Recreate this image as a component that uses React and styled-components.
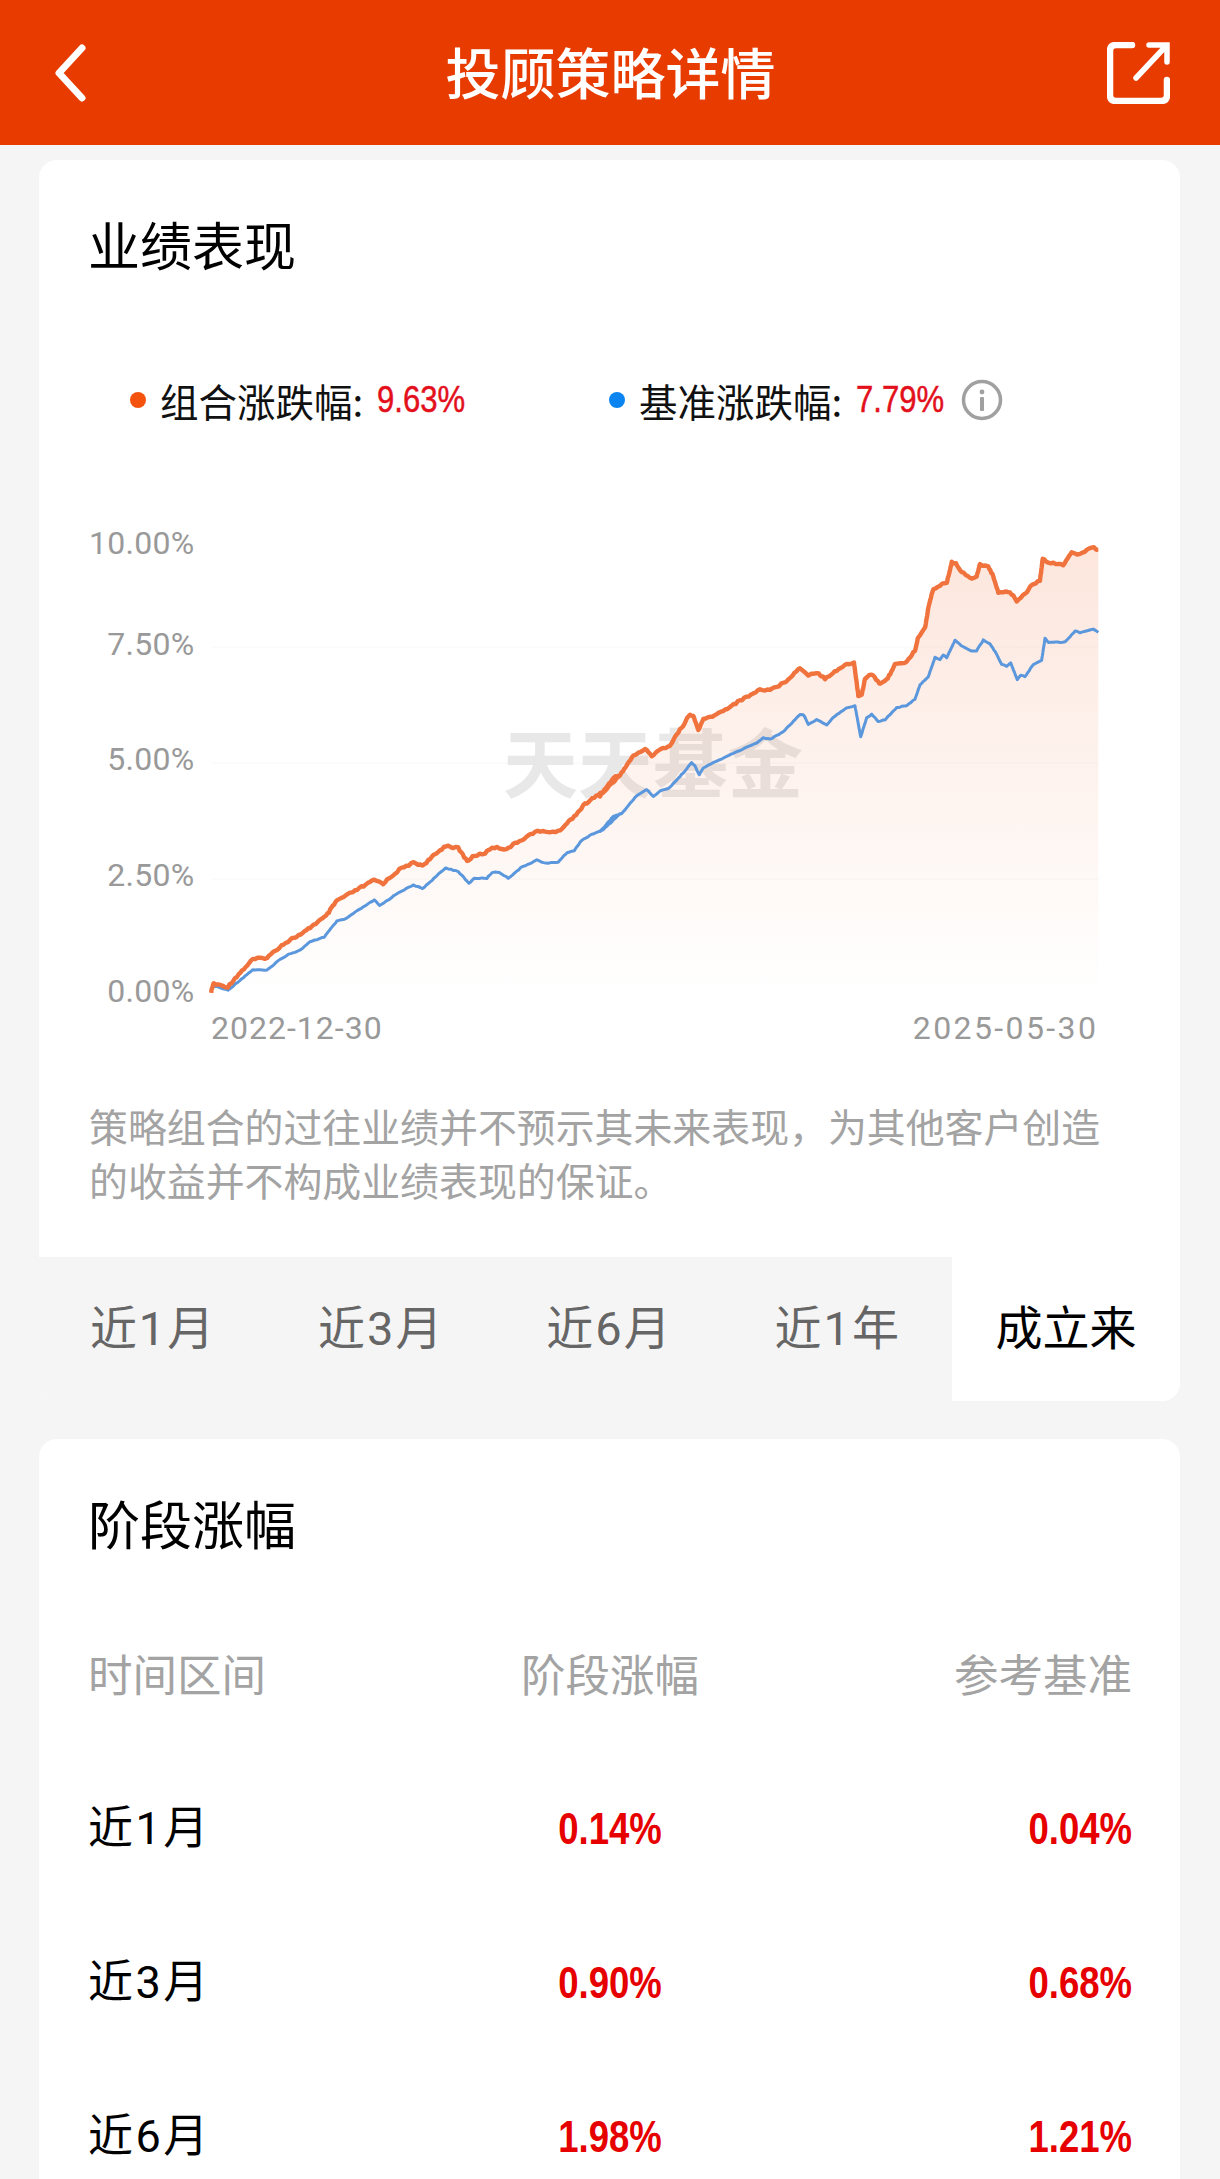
import React from 'react';
import styled, { createGlobalStyle } from 'styled-components';

const GlobalStyle = createGlobalStyle`
  html, body {
    margin: 0;
    padding: 0;
    background: #f5f5f5;
  }
  body {
    font-family: Roboto, "Noto Sans CJK SC", sans-serif;
  }
`;

const Page = styled.div`
  width: 1220px;
  height: 2179px;
  overflow: hidden;
  background: #f5f5f5;
`;

const Header = styled.header`
  height: 145px;
  background: #e73b00;
  display: grid;
  grid-template-columns: 1fr auto 1fr;
  align-items: center;
  padding: 0 50px 0 54px;
  color: #fff;
`;

const HeaderTitle = styled.h1`
  margin: 0 0 5px -3px;
  font-size: 55px;
  line-height: 1;
  font-weight: 500;
  font-family: "Noto Sans CJK SC", sans-serif;
`;

const ShareIcon = styled.svg`
  justify-self: end;
`;

const Card = styled.section`
  margin: ${(p) => p.$top}px 40px 0 39px;
  width: 1141px;
  background: #fff;
  border-radius: 18px;
  overflow: hidden;
`;

const CardTitle = styled.h2`
  margin: 49px 0 0 49px;
  font-size: 52px;
  line-height: 70px;
  font-weight: 400;
  color: #000;
  font-family: "Noto Sans CJK SC", sans-serif;
`;

const Legend = styled.div`
  display: flex;
  align-items: center;
  height: 50px;
  margin: 96px 0 0 91px;
`;

const LegendItem = styled.div`
  display: flex;
  align-items: center;
  width: ${(p) => (p.$grow ? 'auto' : '479px')};
`;

const Dot = styled.span`
  width: 16px;
  height: 16px;
  border-radius: 50%;
  background: ${(p) => p.$color};
  margin-right: 14px;
`;

const LegendLabel = styled.span`
  font-size: 38.5px;
  color: #111;
  font-family: "Noto Sans CJK SC", sans-serif;
`;

// no narrow face is installed, so the digits get squeezed
const LegendValue = styled.span`
  display: inline-block;
  width: 88px;
  margin-left: 14px;
  white-space: nowrap;
  transform: scaleX(0.84);
  transform-origin: left center;
  font-family: "Liberation Sans", sans-serif;
  font-size: 37px;
  -webkit-text-stroke: 0.5px #e3101c;
  color: #e3101c;
`;

const InfoIcon = styled.svg`
  margin-left: 17px;
`;

const ChartSvg = styled.svg`
  display: block;
  margin-top: 96px;
`;

const Disclaimer = styled.p`
  margin: 47px 51px 0 50px;
  font-size: 38.9px;
  line-height: 54px;
  color: #a3a3a3;
  font-family: "Noto Sans CJK SC", sans-serif;
`;

const Tabs = styled.div`
  margin-top: 51px;
  display: grid;
  grid-template-columns: repeat(5, 1fr);
  height: 144px;
`;

const Tab = styled.div`
  display: flex;
  align-items: center;
  justify-content: center;
  padding-bottom: 9px;
  font-size: 47px;
  letter-spacing: ${(p) => (p.$active ? 0 : '2px')};
  background: ${(p) => (p.$active ? '#fff' : '#f5f5f5')};
  color: ${(p) => (p.$active ? '#000' : '#666')};
`;

const Table = styled.div`
  margin: 0 48px 0 49px;
  padding-bottom: 60px;
`;

const Row = styled.div`
  display: grid;
  grid-template-columns: 1fr 1fr 1fr;
  align-items: center;
  height: ${(p) => (p.$head ? '90px' : '154px')};
  margin-top: ${(p) => p.$gap || 0}px;
`;

const Cell = styled.div`
  text-align: ${(p) => p.$align};
  font-size: 44.5px;
  line-height: 1.2;
  color: #a3a3a3;
`;

const RowName = styled.div`
  font-size: 45px;
  line-height: 1.2;
  letter-spacing: 2.5px;
  color: #000;
`;

const Value = styled.div`
  text-align: ${(p) => p.$align};
  font-family: "Liberation Sans", sans-serif;
  font-weight: 700;
  font-size: 44px;
  line-height: 1.2;
  color: #e60000;
  transform: scaleX(0.83);
  transform-origin: ${(p) => p.$align} center;
`;

// traced from the reference, in crop coordinates
const orangeLeft = [[423,1395],[430,1370],[445,1375],[470,1380],[490,1355],[540,1300],[580,1295],[620,1260],[650,1240],[680,1225],[710,1200],[745,1175],[775,1130],[820,1105],[880,1070],[905,1080],[950,1040],[990,1020],[1015,1028],[1080,970],[1115,978],[1140,1015],[1160,1000],[1190,992],[1210,975],[1250,980],[1330,930],[1395,930],[1440,885],[1470,850],[1490,835],[1520,815],[1568,765]];
const orangeRight = [[0,825],[40,775],[60,765],[100,710],[135,690],[155,710],[180,690],[205,685],[240,635],[270,590],[280,595],[295,635],[310,605],[350,590],[420,550],[480,518],[510,518],[550,500],[600,455],[625,475],[650,468],[675,485],[710,462],[740,445],[762,440],[775,535],[785,535],[795,485],[815,472],[842,503],[860,490],[885,445],[915,442],[945,405],[955,365],[975,340],[985,280],[1000,225],[1020,215],[1040,210],[1055,150],[1068,150],[1085,178],[1115,195],[1130,190],[1140,155],[1165,160],[1180,190],[1195,235],[1230,235],[1250,260],[1275,240],[1295,215],[1320,200],[1328,140],[1345,148],[1390,155],[1415,122],[1440,125],[1475,105],[1495,112]];
const blueLeft = [[423,1385],[435,1378],[470,1390],[540,1330],[580,1332],[610,1305],[640,1285],[670,1275],[700,1250],[740,1235],[775,1190],[800,1183],[820,1168],[880,1128],[895,1145],[950,1105],[990,1085],[1015,1095],[1080,1035],[1115,1045],[1145,1080],[1160,1065],[1195,1065],[1210,1048],[1230,1048],[1255,1065],[1290,1035],[1335,1012],[1360,1022],[1395,1018],[1420,990],[1440,985],[1460,955],[1495,935],[1520,925],[1568,878]];
const blueRight = [[0,930],[40,885],[65,878],[110,825],[140,808],[160,828],[180,812],[205,805],[240,770],[275,730],[285,740],[298,765],[310,745],[340,730],[400,703],[470,672],[490,658],[510,662],[550,640],[600,590],[610,590],[625,618],[650,605],[680,620],[700,598],[740,570],[765,565],[782,655],[800,600],[815,590],[835,610],[855,605],[890,570],[920,565],[945,545],[960,505],[985,480],[1005,425],[1020,430],[1030,418],[1040,425],[1065,375],[1090,395],[1115,405],[1130,405],[1150,375],[1170,385],[1190,415],[1205,445],[1220,450],[1232,440],[1252,490],[1262,475],[1275,480],[1300,445],[1325,432],[1335,370],[1345,380],[1395,380],[1425,348],[1440,352],[1480,343],[1495,352]];

const CHART_X = 39;
const CHART_Y = 520;

const toPoints = (left, right) => [
  ...left.map(([x, y]) => [60 + x / 2.8 - CHART_X, 510 + y / 2.9 - CHART_Y]),
  ...right.map(([x, y]) => [600 + x / 3 - CHART_X, 510 + y / 2.9 - CHART_Y]),
];

// the lines are a bit fuzzy, so walk along them and wiggle a little
const roughen = (pts, amount) => {
  const out = [];
  let n = 0;
  for (let i = 0; i < pts.length - 1; i++) {
    const [x1, y1] = pts[i];
    const [x2, y2] = pts[i + 1];
    const steps = Math.max(1, Math.round(Math.hypot(x2 - x1, y2 - y1) / 2.5));
    for (let s = 0; s < steps; s++) {
      const t = s / steps;
      const r = Math.sin(++n * 12.9898) * 43758.5453;
      const wiggle = (r - Math.floor(r) - 0.5) * amount;
      out.push([x1 + (x2 - x1) * t, y1 + (y2 - y1) * t + wiggle]);
    }
  }
  out.push(pts[pts.length - 1]);
  return out;
};

const pathOf = (pts) => pts.map(([x, y], i) => `${i ? 'L' : 'M'}${x.toFixed(1)} ${y.toFixed(1)}`).join('');

const orange = roughen(toPoints(orangeLeft, orangeRight), 2);
const blue = roughen(toPoints(blueLeft, blueRight), 0.8);
const left = orange[0][0];
const right = orange[orange.length - 1][0];
const areaPath = `${pathOf(orange)}L${right} 474L${left} 474Z`;

const axisLabels = [
  ['10.00%', 21],
  ['7.50%', 122],
  ['5.00%', 237],
  ['2.50%', 353],
  ['0.00%', 469],
];

const Chart = () => (
  <ChartSvg width="1141" height="530" viewBox="0 0 1141 530">
    <defs>
      <linearGradient id="area" gradientUnits="userSpaceOnUse" x1="0" y1="28" x2="0" y2="474">
        <stop offset="0" stopColor="#f06428" stopOpacity="0.16" />
        <stop offset="0.5" stopColor="#f06428" stopOpacity="0.08" />
        <stop offset="1" stopColor="#f06428" stopOpacity="0" />
      </linearGradient>
    </defs>
    {[126, 242, 358].map((y) => (
      <line key={y} x1={left} x2={right} y1={y} y2={y} stroke="#f8f8f8" strokeWidth="1" />
    ))}
    <text x="464" y="271" fontSize="75" fontWeight="700" fill="#e8e8e8" fontFamily={'"Noto Sans CJK SC", sans-serif'}>天天基金</text>
    <path d={areaPath} fill="url(#area)" />
    <path d={pathOf(blue)} fill="none" stroke="#5b97dc" strokeWidth="3" strokeLinejoin="round" />
    <path d={pathOf(orange)} fill="none" stroke="#f0723c" strokeWidth="4.4" strokeLinejoin="round" />
    {axisLabels.map(([label, y]) => (
      <text key={label} x="155.5" y={y + 11.5} textAnchor="end" fontSize="32" letterSpacing="0.3" fill="#999" fontFamily="Roboto, sans-serif">{label}</text>
    ))}
    <text x={left} y="517.5" fontSize="32" letterSpacing="1" fill="#999" fontFamily="Roboto, sans-serif">2022-12-30</text>
    <text x={right} y="517.5" textAnchor="end" fontSize="32" letterSpacing="2.4" fill="#999" fontFamily="Roboto, sans-serif">2025-05-30</text>
  </ChartSvg>
);

const tabs = ['近1月', '近3月', '近6月', '近1年', '成立来'];

const rows = [
  ['近1月', '0.14%', '0.04%'],
  ['近3月', '0.90%', '0.68%'],
  ['近6月', '1.98%', '1.21%'],
];

export default function App() {
  return (
    <Page>
      <GlobalStyle />
      <Header>
        <svg width="34" height="58" viewBox="0 0 34 58" fill="none">
          <path d="M28 4 L5 29 L28 54" stroke="#fff" strokeWidth="7" strokeLinecap="round" strokeLinejoin="round" />
        </svg>
        <HeaderTitle>投顾策略详情</HeaderTitle>
        <ShareIcon width="63" height="62" viewBox="0 0 63 62" fill="none">
          <path d="M25 3 H9 Q3 3 3 9 V53 Q3 59 9 59 H54 Q60 59 60 53 V38" stroke="#fff" strokeWidth="6.5" strokeLinecap="round" />
          <path d="M29 36 L59 4 M42 3 H60 V20" stroke="#fff" strokeWidth="5.5" strokeLinecap="round" />
        </ShareIcon>
      </Header>

      <Card $top={15}>
        <CardTitle>业绩表现</CardTitle>
        <Legend>
          <LegendItem>
            <Dot $color="#f4520d" />
            <LegendLabel>组合涨跌幅:</LegendLabel>
            <LegendValue>9.63%</LegendValue>
          </LegendItem>
          <LegendItem $grow>
            <Dot $color="#0a84f0" />
            <LegendLabel>基准涨跌幅:</LegendLabel>
            <LegendValue>7.79%</LegendValue>
            <InfoIcon width="42" height="42" viewBox="0 0 42 42" fill="none">
              <circle cx="21" cy="21" r="18.5" stroke="#a0a0a0" strokeWidth="3.5" />
              <circle cx="21" cy="13" r="2.4" fill="#a0a0a0" />
              <rect x="19" y="18" width="4" height="14" rx="1" fill="#a0a0a0" />
            </InfoIcon>
          </LegendItem>
        </Legend>
        <Chart />
        <Disclaimer>策略组合的过往业绩并不预示其未来表现，为其他客户创造的收益并不构成业绩表现的保证。</Disclaimer>
        <Tabs>
          {tabs.map((t, i) => (
            <Tab key={t} $active={i === tabs.length - 1}>{t}</Tab>
          ))}
        </Tabs>
      </Card>

      <Card $top={38}>
        <CardTitle>阶段涨幅</CardTitle>
        <Table>
          <Row $head $gap={75}>
            <Cell $align="left">时间区间</Cell>
            <Cell $align="center">阶段涨幅</Cell>
            <Cell $align="right">参考基准</Cell>
          </Row>
          {rows.map(([name, a, b], i) => (
            <Row key={name} $gap={i === 0 ? 29 : 0}>
              <RowName>{name}</RowName>
              <Value $align="center">{a}</Value>
              <Value $align="right">{b}</Value>
            </Row>
          ))}
        </Table>
      </Card>
    </Page>
  );
}
